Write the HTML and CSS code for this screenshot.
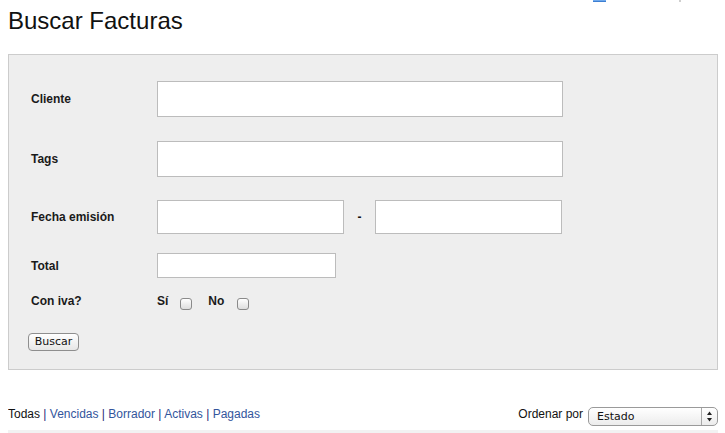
FILE: index.html
```html
<!DOCTYPE html>
<html lang="es">
<head>
<meta charset="utf-8">
<title>Buscar Facturas</title>
<link rel="stylesheet" href="styles.css">
</head>
<body>
<div class="topfrag"><span class="tf-blue"></span><span class="tf-gray"></span></div>
<h1 class="title">Buscar Facturas</h1>
<form class="search-panel">
  <div class="row r-cliente">
    <label class="lbl">Cliente</label>
    <input class="field field-wide" type="text">
  </div>
  <div class="row r-tags">
    <label class="lbl">Tags</label>
    <input class="field field-wide" type="text">
  </div>
  <div class="row r-fecha">
    <label class="lbl">Fecha emisión</label>
    <input class="field field-date" type="text">
    <span class="dash">-</span>
    <input class="field field-date" type="text">
  </div>
  <div class="row r-total">
    <label class="lbl">Total</label>
    <input class="field field-total" type="text">
  </div>
  <div class="row r-iva">
    <label class="lbl">Con iva?</label>
    <span class="opt">Sí</span><input class="check check-si" type="checkbox">
    <span class="opt opt-no">No</span><input class="check check-no" type="checkbox">
  </div>
  <button class="btn" type="button">Buscar</button>
</form>
<div class="filters">
  <div class="tabs">
    <span class="tab-current">Todas</span><span class="sep"> | </span><a class="tab" href="#">Vencidas</a><span class="sep"> | </span><a class="tab" href="#">Borrador</a><span class="sep"> | </span><a class="tab" href="#">Activas</a><span class="sep"> | </span><a class="tab" href="#">Pagadas</a>
  </div>
  <div class="sort">
    <span class="sort-label">Ordenar por</span>
    <span class="select-wrap">
      <select class="select"><option>Estado</option></select>
      <svg class="select-arrows" width="17" height="19" viewBox="0 0 17 19">
        <line x1="0.5" y1="1" x2="0.5" y2="18" stroke="#a8a8a8" stroke-width="1"/>
        <polygon points="6,8 8.5,4.5 11,8" fill="#222"/>
        <polygon points="6,11 8.5,14.5 11,11" fill="#222"/>
      </svg>
    </span>
  </div>
</div>
<div class="table-head"></div>
</body>
</html>
```
FILE: styles.css
```css
html, body {
  background: #fff;
}
body {
  margin: 0 7px 0 8px;
  font-family: "Liberation Sans", Arial, Helvetica, sans-serif;
  font-size: 12px;
  color: #111;
  overflow: hidden;
}
.topfrag {
  position: absolute;
  top: 0;
  left: 593px;
  display: flex;
  align-items: flex-start;
  gap: 73px;
}
.tf-blue {
  display: block;
  width: 13px;
  height: 2px;
  background: #6ea8ec;
  border-bottom: 1px solid #3d7fd2;
  box-sizing: border-box;
}
.tf-gray {
  display: block;
  width: 2px;
  height: 2px;
  background: #cfcfcf;
}
.title {
  font-size: 24px;
  line-height: 28px;
  font-weight: normal;
  margin: 7px 0 19px;
  color: #111;
}
.search-panel {
  width: 710px;
  box-sizing: border-box;
  margin: 0;
  background: #eee;
  border: 1px solid #ccc;
  padding: 26px 0 18px 22px;
}
.row {
  display: flex;
  align-items: center;
}
.lbl {
  width: 126px;
  flex: none;
  font-weight: bold;
  color: #1a1a1a;
}
.field {
  box-sizing: border-box;
  margin: 0;
  padding: 0 4px;
  border: 1px solid #bcbcbc;
  background: #fff;
  font-family: "Liberation Sans", Arial, sans-serif;
  font-size: 12px;
  outline: none;
}
.field-wide {
  width: 406px;
  height: 36px;
}
.field-date {
  width: 187px;
  height: 34px;
}
.field-total {
  width: 179px;
  height: 25px;
}
.dash {
  width: 31px;
  text-align: center;
  font-weight: bold;
}
.r-cliente { margin-bottom: 24px; }
.r-tags { margin-bottom: 23px; }
.r-fecha { margin-bottom: 19px; }
.r-total { margin-bottom: 13px; }
.r-iva {
  height: 20px;
  margin-bottom: 22px;
}
.opt {
  font-weight: bold;
  color: #1a1a1a;
}
.opt-no {
  margin-left: 16px;
}
.check {
  -webkit-appearance: none;
  appearance: none;
  width: 12px;
  height: 12px;
  box-sizing: border-box;
  border: 1px solid #8a8a8a;
  border-radius: 3px;
  background: linear-gradient(#ffffff, #dedede);
  margin: 5px 0 0 12px;
  padding: 0;
}
.check-no {
  margin-left: 13px;
}
.btn {
  display: block;
  margin: 0 0 0 -3px;
  width: 51px;
  height: 18px;
  padding: 0;
  box-sizing: border-box;
  border: 1px solid #8e8e8e;
  border-radius: 4px;
  background: linear-gradient(#ffffff, #e6e6e6);
  font-family: "DejaVu Sans", "Lucida Grande", sans-serif;
  font-size: 11px;
  line-height: 16px;
  color: #111;
}
.filters {
  width: 710px;
  margin-top: 36px;
  display: flex;
  justify-content: space-between;
  align-items: flex-start;
}
.tabs {
  line-height: 16px;
}
.tab-current {
  color: #111;
}
.sep {
  color: #2d2a7a;
}
.tab {
  color: #33559c;
  text-decoration: none;
}
.sort {
  display: flex;
  align-items: flex-start;
}
.sort-label {
  line-height: 16px;
  color: #111;
}
.select-wrap {
  position: relative;
  display: block;
  margin: 1px 0 0 5px;
  width: 130px;
  height: 19px;
}
.select {
  -webkit-appearance: none;
  appearance: none;
  display: block;
  width: 130px;
  height: 19px;
  box-sizing: border-box;
  margin: 0;
  padding: 0 0 0 8px;
  border: 1px solid #9a9a9a;
  border-radius: 5px;
  background: linear-gradient(#ffffff, #ececec);
  font-family: "DejaVu Sans", "Lucida Grande", sans-serif;
  font-size: 11px;
  line-height: 17px;
  color: #111;
}
.select-arrows {
  position: absolute;
  top: 0;
  right: 0;
}
.table-head {
  width: 710px;
  height: 30px;
  margin-top: 4px;
  background: #f2f2f2;
}
```
